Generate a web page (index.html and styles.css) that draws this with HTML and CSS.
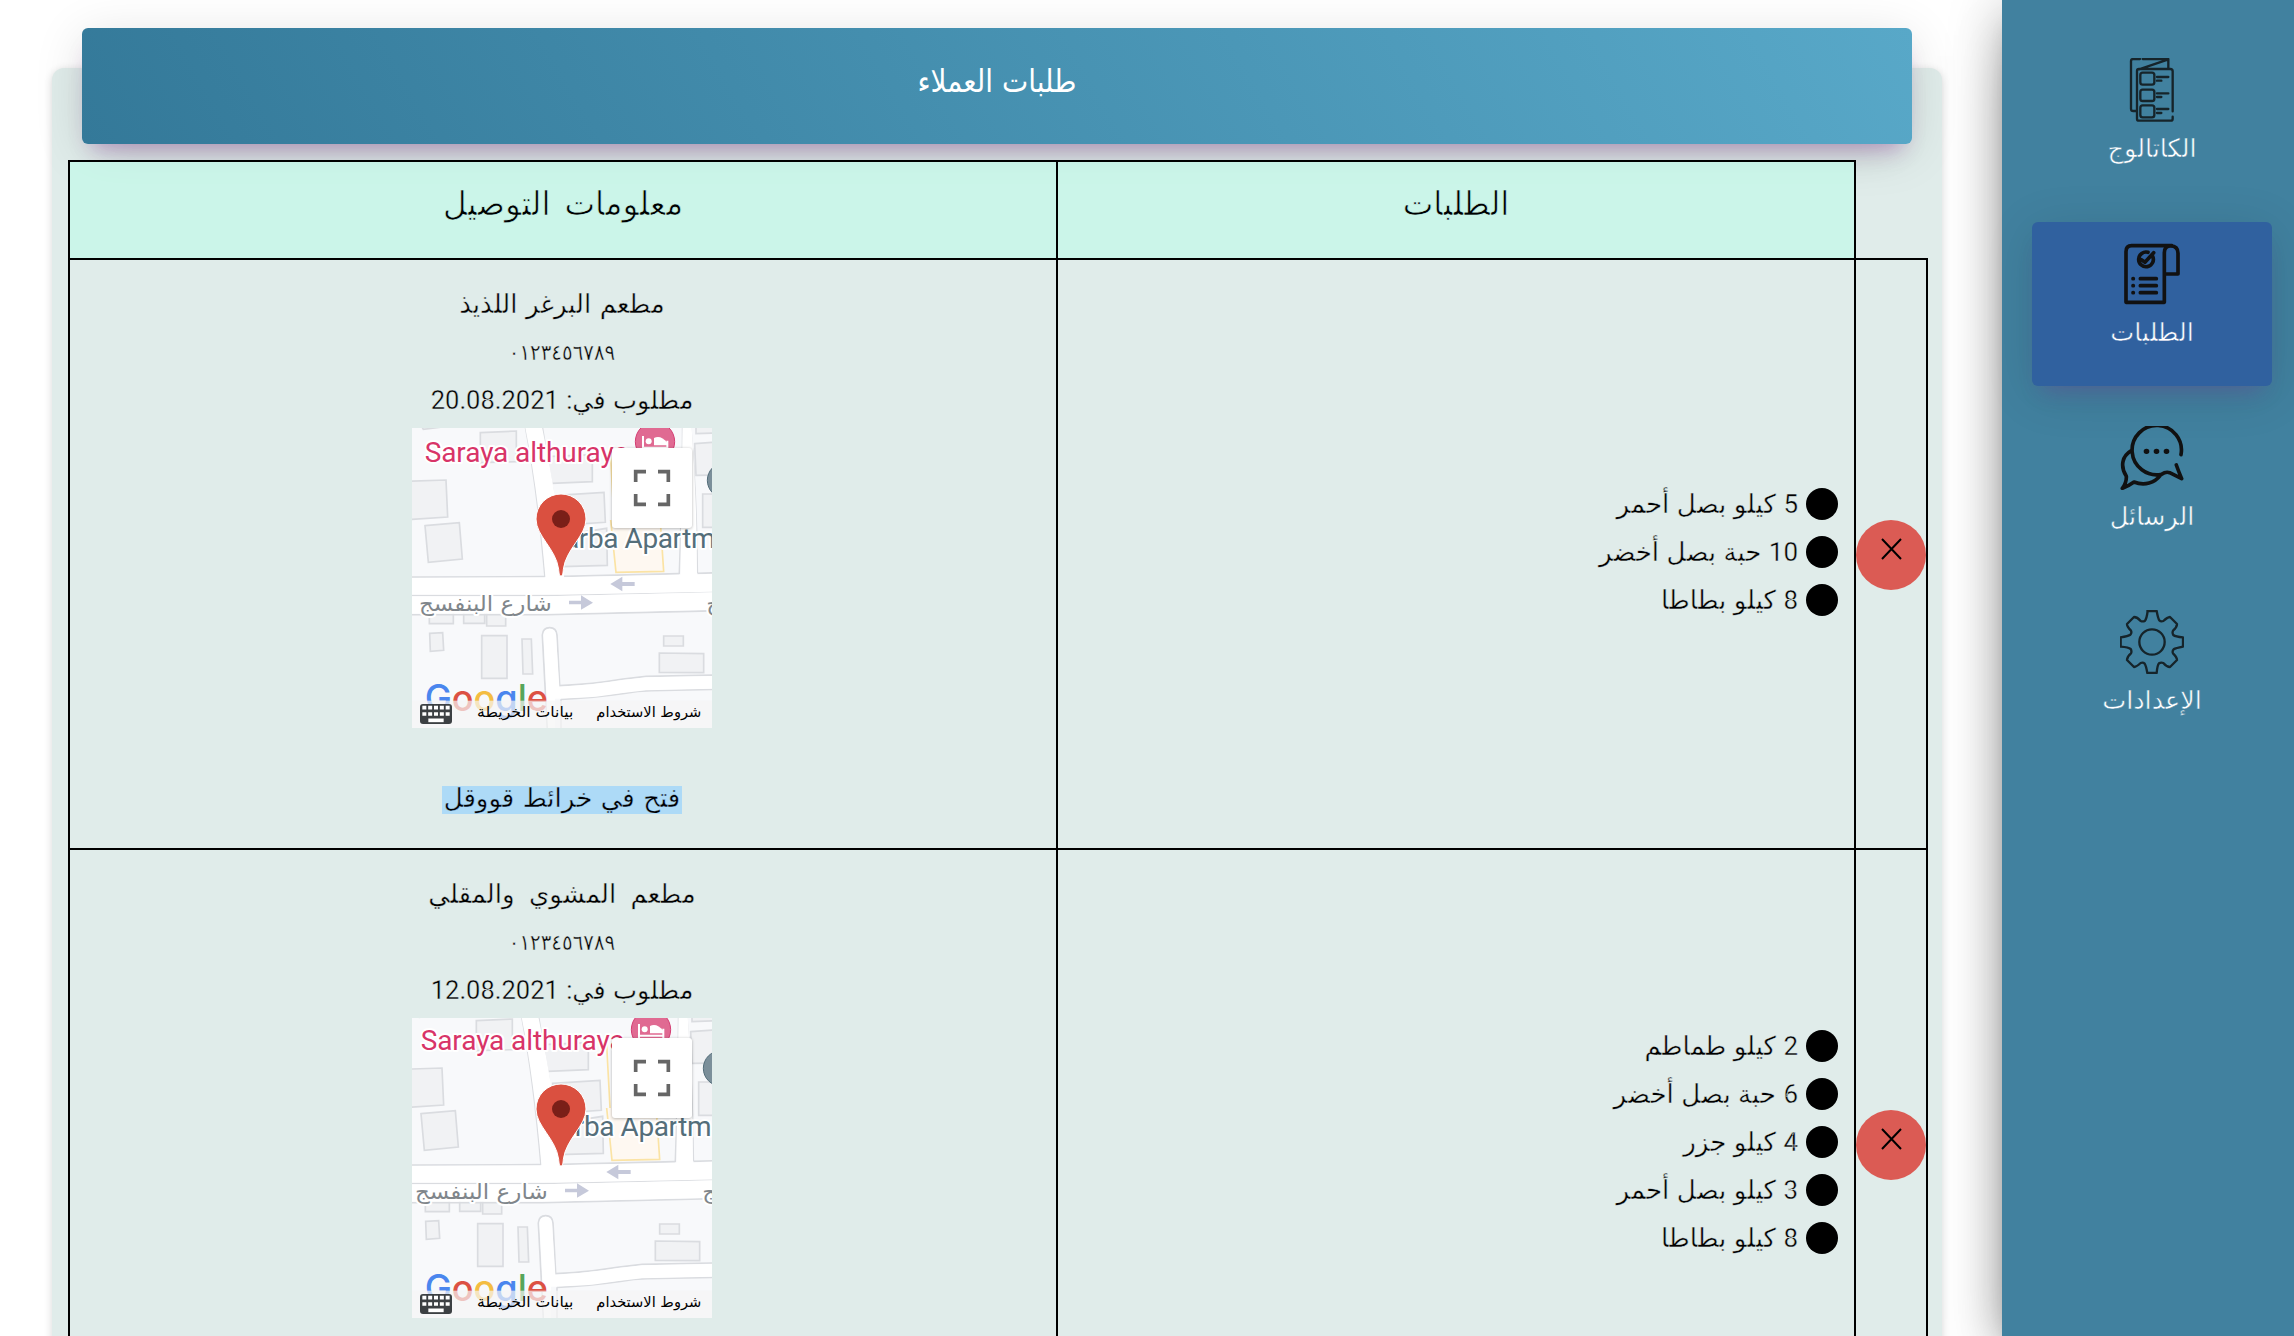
FILE: index.html
```html
<!DOCTYPE html>
<html lang="ar" dir="rtl">
<head>
<meta charset="utf-8">
<title>طلبات العملاء</title>
<link rel="stylesheet" href="styles.css">
</head>
<body>
<svg class="defs" width="0" height="0" aria-hidden="true">
  <defs>
    <g id="streets">
      <rect x="0" y="0" width="1000" height="960" fill="#f8f9fb"/>
      <g fill="#f1f2f4" stroke="#dadce0" stroke-width="5">
        <path d="M241 38l108-5v92l-108 3zM20 184l118-4 5 111-123 8zM75 317l103-9 9 109-102 10zM441 110l136-6v81l-138 6zM470 226l142-9 4 90-140 9zM490 345l130-20 2 111-135 4zM88 550h72v61h-72zM191 560h63v50h-63zM260 572h57v46h-57zM89 640l39-2 3 53-40 3zM245 647h76v128h-76zM366 657h28l4 105h-29zM791 648h59v30h-59zM778 699l133 2v57l-133-1zM884 71l80-6v100l-76 1zM908 222h60v100h-60zM888 -20h80v58l-80 3zM60 10l60-8v20l-50 6z"/>
      </g>
      <path d="M632 110l10 190M632 300l16 157 143-3-10-150" fill="#fef8f1" stroke="#fbe3a4" stroke-width="5"/>
      <g fill="none" stroke="#dadce0" stroke-width="5">
        <path d="M368 -20q42 200 67 491M420 -20l40 240M868 -20q22 220 24 480M848 -20q0 200-10 482"/>
        <path d="M0 471l435-1M490 469l348-8M893 460l100-3M0 526h440l560-13M0 584h440l560-13"/>
        <path d="M443 950q-8-150-16-305 2-22 22-22t22 22l8 152q100-5 190-20 40-5 70-8l260-5M483 838q100-5 190-18 40-7 80-8l250-5M483 838v110"/>
      </g>
      <path d="M371 0q41 190 66 480h56q-14-220-76-500zM848 0l-7 470h50q0-250-20-500z" fill="#fff"/>
      <path d="M0 474l480-2 500-11v53l-500 10H0zM0 529h440l560-13v52l-560 13H0z" fill="#fff"/>
      <path d="M446 960q-8-180-16-315 2-19 19-19t19 19l10 155q100-5 190-20l70-8 250-5v38l-250 6q-80 9-150 19-70 5-123 6v120z" fill="#fff"/>
      <path d="M631 492l36-22v16h37v12h-37v16zM579 548l-36-22v16h-36v11h36v16z" fill="#c6c9da"/>
      <circle cx="765" cy="65" r="59" fill="#e06a92" stroke="#d43d72" stroke-width="3"/>
      <path d="M729 48v47M727 83h75M802 92V62" stroke="#fff" stroke-width="6"/>
      <circle cx="746" cy="64" r="9" fill="#fff"/>
      <path d="M762 76V54q20-10 40 14v8z" fill="#fff"/>
      <circle cx="975" cy="181" r="53" fill="#7b8f9a" stroke="#546e7a" stroke-width="3"/>
      <g class="label">
        <text class="poi hotel" x="74" y="125" textLength="612">Saraya althuraya</text>
        <text class="poi flat" x="492" y="384" textLength="455">arba Apartm</text>
        <text class="street" x="455" y="573" textLength="398" lengthAdjust="spacingAndGlyphs" direction="rtl">شارع البنفسج</text>
        <text class="street" x="1317" y="573" textLength="398" lengthAdjust="spacingAndGlyphs" direction="rtl">شارع البنفسج</text>
      </g>
    </g>
    <g id="controls">
      <path d="M483 468c-5 0-6-8-7-20-8-62-68-100-68-151a75 75 0 0 1 150 0c0 51-60 89-68 151-1 12-2 20-7 20z" fill="#da5040" stroke="#fff" stroke-width="3"/>
      <circle cx="483" cy="297" r="27" fill="#7a1f18"/>
      <rect class="fs" x="636" y="84" width="240" height="240" rx="9" fill="#fff"/>
      <path d="M707 186v-31h31M774 155h31v31M805 222v31h-31M738 253h-31v-31" fill="none" stroke="#666" stroke-width="11"/>
      <text class="brand" x="74" y="872" textLength="370" lengthAdjust="spacingAndGlyphs"><tspan fill="#4a86ee">G</tspan><tspan fill="#dc5143">o</tspan><tspan fill="#f4bd42">o</tspan><tspan fill="#4a86ee">g</tspan><tspan fill="#57a55a">l</tspan><tspan fill="#dc5143">e</tspan></text>
      <rect x="36" y="842" width="900" height="82" fill="#f5f5f5" opacity=".7"/>
      <rect x="60" y="852" width="96" height="60" rx="9" fill="#3c4043"/>
      <path d="M67 863h82M67 882h82" stroke="#fff" stroke-width="11" stroke-dasharray="12 5.5"/>
      <path d="M85 901h46" stroke="#fff" stroke-width="11"/>
      <text class="terms" x="520" y="891" textLength="289" lengthAdjust="spacingAndGlyphs" direction="rtl">بيانات الخريطة</text>
      <text class="terms" x="904" y="891" textLength="315" lengthAdjust="spacingAndGlyphs" direction="rtl">شروط الاستخدام</text>
    </g>
  </defs>
</svg>

<div class="layout">
  <nav class="sidebar">
    <a class="nav-item">
      <svg class="nav-icon thin" viewBox="0 0 192 192"><path d="M60 3H39q-6 0-6 6v143q0 7 7 7h10M68 3h77v28M57 34L143 5M57 33h94q7 0 7 7v120M158 176v6q0 6-6 6H57q-6 0-6-6V39q0-6 6-6"/><path d="M68 44h28q7 0 7 7v22q0 7-7 7H68q-7 0-7-7V51q0-7 7-7zM68 95h28q7 0 7 7v20q0 7-7 7H68q-7 0-7-7v-20q0-7 7-7zM68 142h28q7 0 7 7v22q0 7-7 7H68q-7 0-7-7v-22q0-7 7-7zM111 57h34M111 68h13M111 106h34M111 117h13M111 153h34M111 165h13"/></svg>
      <span class="nav-text">الكاتالوج</span>
    </a>
    <a class="nav-item active">
      <svg class="nav-icon bold" viewBox="0 0 192 192"><path d="M156 11H35q-17 0-17 18v152h115V32q0-20 19-20 22 0 22 22v62h-38M98 43a22 22 0 1 1-14-12M64 53l11 8 26-29"/><path d="M39 110h1M39 131h1M39 152h1M61 110h48M61 131h48M61 152h48"/></svg>
      <span class="nav-text">الطلبات</span>
    </a>
    <a class="nav-item">
      <svg class="nav-icon bold" viewBox="0 0 192 192"><path d="M183 86A74 74 0 1 0 125 145Q137 136 149 140L185 158Q176 137 169 117M34 74C6 90 0 121 19 151Q20 170 7 187Q24 181 42 168C74 181 104 170 121 148"/><path class="dots" d="M79 76h1M109 76h1M139 76h1"/></svg>
      <span class="nav-text">الرسائل</span>
    </a>
    <a class="nav-item">
      <svg class="nav-icon thin" viewBox="0 0 192 192"><circle cx="96" cy="96" r="38"/><path d="M82 3h28q4 22 8 28 5 5 12 2 12-11 20-12l21 21q0 10-12 20-3 7 1 13 6 5 29 7v28q-22 4-28 8-5 5-2 12 12 12 12 20l-21 21q-10 0-20-12-7-3-13 1-5 6-7 29H82q-4-22-8-28-5-5-12-2-12 11-20 12l-21-21q0-10 12-20 3-7-1-13-6-5-30-7V82q23-4 29-8 5-5 2-12-12-12-12-20l21-21q10 0 20 12 7 3 13-1 5-6 8-29z"/></svg>
      <span class="nav-text">الإعدادات</span>
    </a>
  </nav>

  <main class="content">
    <section class="card">
      <h1 class="banner">طلبات العملاء</h1>
      <table class="orders">
        <colgroup><col class="c-del"><col class="c-items"><col class="c-info"></colgroup>
        <thead><tr><td class="blank"></td><th>الطلبات</th><th>معلومات التوصيل</th></tr></thead>
        <tbody>
          <tr>
            <td><button class="remove"><svg viewBox="0 0 21 22" width="21" height="22"><path d="M1 1l19 20M20 1L1 21"/></svg></button></td>
            <td><ul class="items"><li>5 كيلو بصل أحمر</li><li>10 حبة بصل أخضر</li><li>8 كيلو بطاطا</li></ul></td>
            <td><div class="info"><p>مطعم البرغر اللذيذ</p><p class="phone">٠١٢٣٤٥٦٧٨٩</p><p class="date">مطلوب في: 20.08.2021</p>
              <svg class="map" viewBox="36 24 900 900"><use href="#streets"/><use href="#controls"/></svg>
              <p class="open"><span class="selected">فتح في خرائط قووقل</span></p></div></td>
          </tr>
          <tr>
            <td><button class="remove"><svg viewBox="0 0 21 22" width="21" height="22"><path d="M1 1l19 20M20 1L1 21"/></svg></button></td>
            <td><ul class="items"><li>2 كيلو طماطم</li><li>6 حبة بصل أخضر</li><li>4 كيلو جزر</li><li>3 كيلو بصل أحمر</li><li>8 كيلو بطاطا</li></ul></td>
            <td><div class="info"><p class="wide">مطعم المشوي والمقلي</p><p class="phone">٠١٢٣٤٥٦٧٨٩</p><p class="date">مطلوب في: 12.08.2021</p>
              <svg class="map" viewBox="36 24 900 900"><use href="#streets" transform="translate(-12 -6)"/><use href="#controls"/></svg></div></td>
          </tr>
        </tbody>
      </table>
    </section>
  </main>
</div>
</body>
</html>
```
FILE: styles.css
```css
* { box-sizing: border-box; }
body {
  margin: 0;
  height: 1336px;
  overflow: hidden;
  background: #fff;
  color: #000;
  font-family: Roboto, "DejaVu Sans", sans-serif;
  font-weight: 400;
}
.defs { position: absolute; }
.layout { display: flex; height: 1336px; overflow: hidden; }

.sidebar {
  display: flex;
  flex-direction: column;
  align-items: center;
  gap: 20px;
  flex: none;
  width: 292px;
  height: 1336px;
  padding: 38px 22px 0 30px;
  background: #41819f;
  box-shadow: 0 32px 60px -24px rgba(0, 0, 0, .5), 0 8px 50px 0 rgba(0, 0, 0, .28), 0 16px 20px -10px rgba(0, 0, 0, .15);
}
.nav-item {
  display: flex;
  flex-direction: column;
  align-items: center;
  width: 240px;
  height: 164px;
  padding-top: 20px;
  border-radius: 6px;
  color: #fff;
  -webkit-text-stroke: .5px #41819f;
}
.nav-item.active {
  background: #30619f;
  box-shadow: 0 8px 50px 0 rgba(0, 0, 0, .12), 0 14px 20px -10px rgba(156, 39, 176, .25);
  -webkit-text-stroke-color: #30619f;
}
.nav-icon {
  width: 64px;
  height: 64px;
  fill: none;
  stroke: #111;
  stroke-linecap: round;
  stroke-linejoin: round;
}
.nav-icon.thin { stroke-width: 7; stroke: #16242a; }
.nav-icon.bold { stroke-width: 11; }
.nav-icon .dots { stroke-width: 16; }
.nav-text { font-size: 25.5px; line-height: 53px; height: 53px; }

.content { flex: 1; min-width: 0; padding: 68px 60px 0 52px; }
.card {
  height: 1500px;
  border-radius: 12px;
  background: #e0ecea;
  box-shadow: 0 2px 8px rgba(0, 0, 0, .16);
}
.banner {
  position: relative;
  top: -40px;
  height: 116px;
  margin: 0 30px -24px;
  border-radius: 6px;
  background: linear-gradient(60deg, #347999, #58a8c8);
  box-shadow: 0 24px 40px -20px rgba(0, 0, 0, .1), 0 8px 50px 0 rgba(0, 0, 0, .12), 0 14px 20px -10px rgba(156, 39, 176, .35);
  color: #fff;
  font-family: "DejaVu Sans Condensed", "DejaVu Sans", sans-serif;
  font-size: 31px;
  font-weight: 400;
  line-height: 107px;
  text-align: center;
}
.orders {
  position: relative;
  width: 1860px;
  margin: 0 14px 0 0;
  border-collapse: collapse;
  table-layout: fixed;
}
.c-del { width: 72px; }
.c-items { width: 798px; }
.c-info { width: 988px; }
.orders th, .orders tbody td { border: 2px solid #000; padding: 0; }
.orders .blank { border: 0; padding: 0; }
.orders thead tr { height: 98px; }
.orders th {
  background: rgba(197, 248, 232, .8);
  font-size: 32.5px;
  font-weight: 400;
  line-height: 84px;
  vertical-align: top;
  word-spacing: 6px;
  -webkit-text-stroke: .7px #ccf5e9;
}
.orders tbody tr { height: 590px; }

.remove {
  display: flex;
  justify-content: center;
  width: 70px;
  height: 70px;
  margin-top: 2px;
  padding: 18px 1px 0 0;
  border: 0;
  border-radius: 50%;
  background: #db5b54;
}
.remove svg { margin-left: 1px; }
.remove path { fill: none; stroke: #000; stroke-width: 2; }

.items {
  margin: 0;
  padding: 0 16px 4px;
  list-style: none;
  font-size: 26px;
  word-spacing: 1px;
  -webkit-text-stroke: .4px #e0ecea;
}
.items li { display: flex; align-items: center; gap: 8px; height: 48px; line-height: 40px; }
.items li::before {
  content: "";
  width: 32px;
  height: 32px;
  border-radius: 50%;
  background: #000;
}

.info {
  display: flex;
  flex-direction: column;
  align-items: center;
  height: 588px;
  padding: 20px 2px 0 0;
  font-size: 26px;
  word-spacing: 2px;
  -webkit-text-stroke: .4px #e0ecea;
}
.info p { margin: 0; height: 48px; line-height: 49px; }
.info .date { font-size: 25.5px; word-spacing: 1px; }
.info .wide { word-spacing: 8px; }
.info .phone { font-family: "DejaVu Sans Condensed", "DejaVu Sans", sans-serif; font-size: 22px; }
.info .map { display: block; width: 300px; height: 300px; margin-top: 4px; word-spacing: 0; -webkit-text-stroke: 0; }
.info .open { display: flex; align-items: center; margin-top: 48px; }
.selected {
  height: 28px;
  line-height: 24px;
  padding: 0 2px;
  background: #addaf7;
  -webkit-text-stroke-color: #addaf7;
}

.label text { paint-order: stroke; stroke: #fff; stroke-width: 12px; stroke-linejoin: round; -webkit-text-stroke: 12px #fff; }
.poi { font: 84px Roboto, sans-serif; direction: ltr; }
.hotel { fill: #d83468; }
.flat { fill: #546e7a; }
.street { font: 64px "DejaVu Sans", sans-serif; fill: #80868b; }
.brand { font: 500 110px Inter, sans-serif; direction: ltr; }
.terms { font: 44px "DejaVu Sans", sans-serif; fill: #000; }
.fs { filter: drop-shadow(0 2px 5px rgba(0, 0, 0, .3)); }
```
